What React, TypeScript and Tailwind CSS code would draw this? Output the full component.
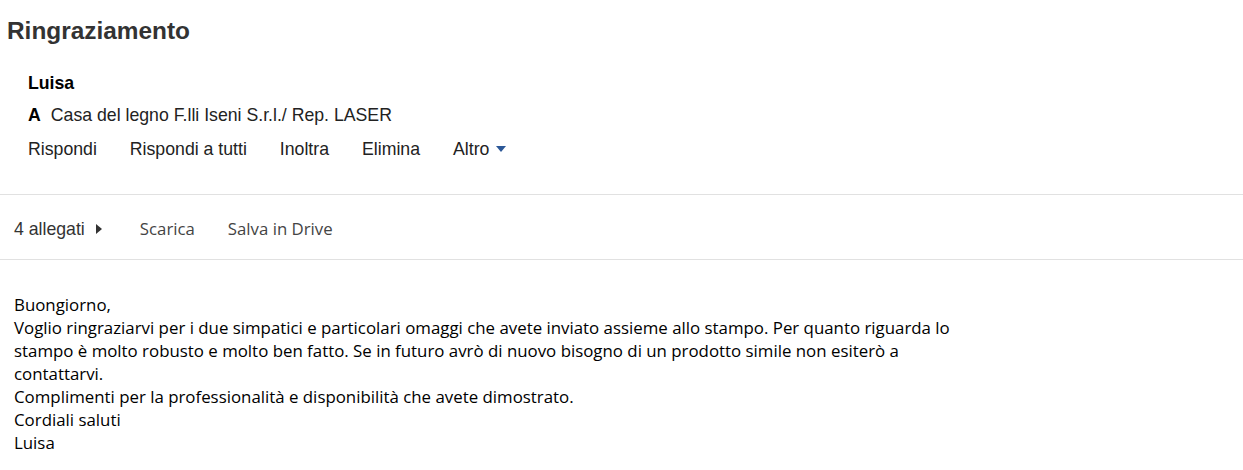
export default function App() {
  const actions = ['Rispondi', 'Rispondi a tutti', 'Inoltra', 'Elimina']

  return (
    <div className="w-[1243px] h-[470px] overflow-hidden bg-white text-[#222]">
      {/* intestazione messaggio */}
      <div className="font-['Liberation_Sans',Arial,sans-serif]">
        <h1 className="pl-[7px] pt-[17px] text-[24.4px] leading-[28px] font-bold text-[#333]">Ringraziamento</h1>
        <div className="pl-[28px] pt-[28px]">
          <div className="text-[17.7px] leading-[20px] font-bold text-black">Luisa</div>
          <div className="mt-[12px] flex items-center text-[17.7px] leading-[20px] text-[#222]">
            <span className="font-bold text-black mr-[10px]">A</span>
            <span>Casa del legno F.lli Iseni S.r.l./ Rep. LASER</span>
          </div>
          <div className="mt-[14px] flex items-center gap-[33px] text-[17.7px] leading-[20px] text-[#222]">
            {actions.map((a) => (
              <span key={a}>{a}</span>
            ))}
            <span className="flex items-center gap-[7px]">
              Altro
              <svg width="10" height="6" viewBox="0 0 10 6">
                <path d="M0 0 L10 0 L5 6 Z" fill="#2b5797" />
              </svg>
            </span>
          </div>
        </div>
      </div>

      <div className="mt-[35px] border-t border-[#e1e1e1]" />

      {/* allegati */}
      <div className="h-[64px] pt-[4px] flex items-center pl-[14px]">
        <span className="flex items-center font-['Liberation_Sans',Arial,sans-serif] text-[17.7px] text-[#333]">
          4 allegati
          <svg className="ml-[11px]" width="6" height="10" viewBox="0 0 6 10">
            <path d="M0 0 L6 5 L0 10 Z" fill="#333" />
          </svg>
        </span>
        <span className="ml-[38px] font-['Open_Sans',sans-serif] text-[16.8px] text-[#444]">Scarica</span>
        <span className="ml-[33px] font-['Open_Sans',sans-serif] text-[16.8px] text-[#444]">Salva in Drive</span>
      </div>

      <div className="border-t border-[#e1e1e1]" />

      {/* corpo */}
      <div className="pl-[14px] pt-[33px] w-[960px] font-['Open_Sans',sans-serif] text-[16.85px] leading-[23px] text-black">
        <p>Buongiorno,</p>
        <p>
          Voglio ringraziarvi per i due simpatici e particolari omaggi che avete inviato assieme allo stampo. Per quanto riguarda lo stampo è molto robusto e molto ben fatto. Se in futuro avrò di nuovo bisogno di un prodotto simile non esiterò a contattarvi.
        </p>
        <p>Complimenti per la professionalità e disponibilità che avete dimostrato.</p>
        <p>Cordiali saluti</p>
        <p>Luisa</p>
      </div>
    </div>
  )
}
